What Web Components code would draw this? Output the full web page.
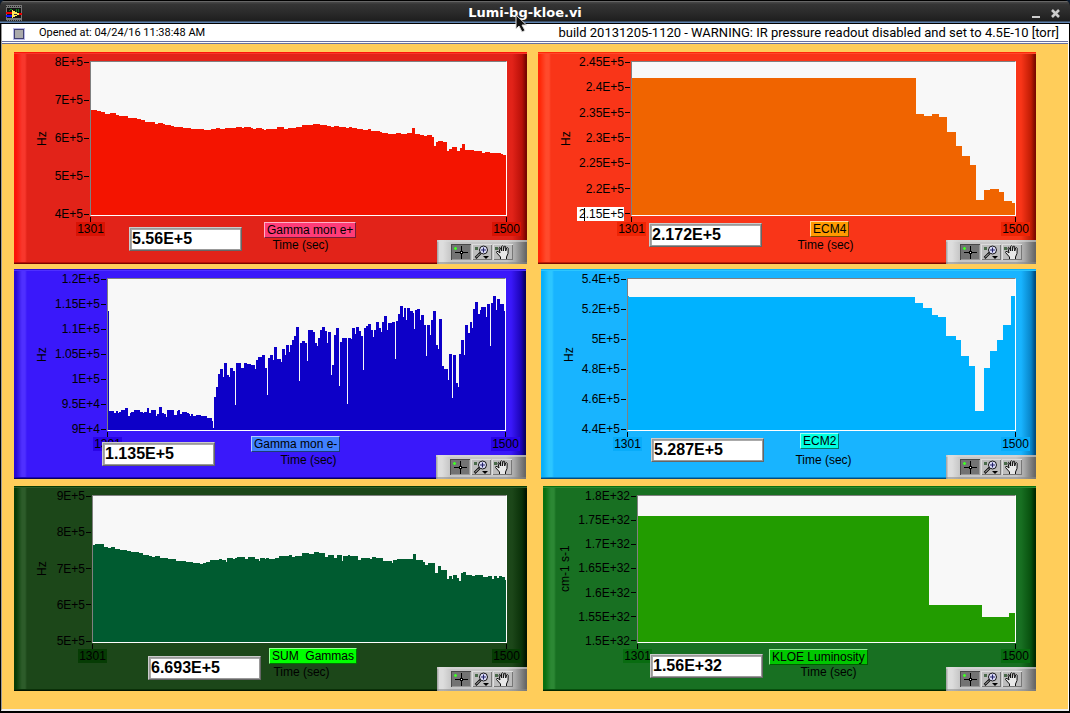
<!DOCTYPE html>
<html lang="en">
<head>
<meta charset="utf-8">
<title>Lumi-bg-kloe.vi</title>
<style>
html, body { margin: 0; height: 100%; }
body { background: #0a1a30; font: 12px/14px "Liberation Sans", Arial, sans-serif; color: #000; }
</style>
</head>
<body>
<vi-window heading="Lumi-bg-kloe.vi">
  <vi-status slot="status">
    <span slot="opened">Opened at: 04/24/16 11:38:48 AM</span>
    <span slot="build">build 20131205-1120 - WARNING: IR pressure readout disabled and set to 4.5E-10 [torr]</span>
  </vi-status>
  <panel-row style="--cols:513fr 498fr;--gap:11px;--share:210">
    <trend-panel data-key="eplus"></trend-panel>
    <trend-panel data-key="ecm4"></trend-panel>
  </panel-row>
  <panel-row style="--cols:512fr 495fr;--gap:15px;--share:210">
    <trend-panel data-key="eminus"></trend-panel>
    <trend-panel data-key="ecm2"></trend-panel>
  </panel-row>
  <panel-row style="--cols:513fr 493fr;--gap:16px;--share:205">
    <trend-panel data-key="sum"></trend-panel>
    <trend-panel data-key="kloe"></trend-panel>
  </panel-row>
</vi-window>

<template id="window-tpl">
<style>
:host { display: flex; flex-direction: column; min-height: 100vh; box-sizing: border-box; border-radius: 6px 6px 0 0; overflow: hidden; background: #000; }
header { position: relative; display: grid; grid-template-columns: 60px 1fr 60px; align-items: center; height: 24px; box-sizing: border-box; padding: 0 8px 0 6px;
  background: linear-gradient(#000 0 1px, #666 1px 2px, #444 2px 3px, #353535 4px, #2b2b2b 12px, #1e1e1e 21px, #5f83b0 22px 23px, #000 23px); }
.logo { width: 16px; height: 16px; margin-top: 2px; display: block; }
h1 { margin: 0; text-align: center; font: bold 13px/16px "DejaVu Sans", sans-serif; color: #fff; padding-right: 18px; margin-top: 2px; }
nav { display: flex; justify-content: flex-end; gap: 9px; padding-top: 1px; }
nav button { background: none; border: 0; padding: 0; width: 11px; height: 12px; }
nav svg { display: block; }
.pointer { position: absolute; left: calc(50% - 20px); top: 14px; z-index: 3; }
.frame { flex: 1; display: flex; flex-direction: column; padding: 0 1px 2px; background: #000; }
.inner { flex: 1; display: flex; flex-direction: column; border-left: 1px solid #999; border-right: 1px solid #fff; border-bottom: 2px solid #eee; }
main { flex: 1; display: flex; flex-direction: column; gap: 7px; padding: 8px 32px 18px 12px; background: #ffcd5a; }
</style>
<header>
  <svg class="logo" viewBox="0 0 16 16" shape-rendering="crispEdges">
    <rect width="16" height="16" fill="#777"/>
    <path d="M0 1h16M0 15h16" stroke="#222" stroke-width="1" stroke-dasharray="1 1"/>
    <rect x="1" y="3" width="14" height="10" fill="#141414"/>
    <path d="M3 6l2-2 2 2M10 4v3M12 4v3" stroke="#0a8a1a" fill="none"/>
    <path d="M0 8h6" stroke="#e00" stroke-width="2"/><path d="M0 11h6" stroke="#11f" stroke-width="2"/>
    <path d="M11 9h5" stroke="#e00" stroke-width="2"/>
    <path d="M6 5l8 4-8 4z" fill="#ffe95a"/><path d="M8 9h3" stroke="#333"/>
  </svg>
  <h1></h1>
  <nav>
    <button aria-label="Minimize"><svg width="11" height="12"><path d="M1 10h8" stroke="#ccc" stroke-width="2"/></svg></button>
    <button aria-label="Close"><svg width="11" height="12"><path d="M1 3l7 7M8 3l-7 7" stroke="#ccc" stroke-width="2.6"/></svg></button>
  </nav>
  <svg class="pointer" width="14" height="20" viewBox="0 0 14 20"><path d="M1 1v14l3-3 3 6 3-1.500-3-5.500h4.500z" fill="#111" stroke="#ddd"/></svg>
</header>
<div class="frame"><div class="inner">
  <slot name="status"></slot>
  <main><slot></slot></main>
</div></div>
</template>

<template id="status-tpl">
<style>
:host { display: flex; align-items: center; height: 20px; box-sizing: border-box; padding: 0 9px 2px 11px; background: linear-gradient(#fff 0 17px, #6870a0 17px 18px, #fff 18px 19px, #6870a0 19px); white-space: pre; font-family: Roboto, "Liberation Sans", sans-serif; }
button { width: 12px; height: 12px; margin: 1px 14px 0 0; padding: 0; background: #aaa; border: 1px solid #b8b8e8; box-shadow: inset 0 0 0 1px #404070; }
.opened { font-size: 11px; }
.space { flex: 1; }
.build { font-size: 13px; }
</style>
<button aria-label="Status indicator"></button>
<slot name="opened" class="opened"></slot><span class="space"></span>
<slot name="build" class="build"></slot>
</template>

<template id="row-tpl">
<style>
:host { display: grid; grid-template-columns: var(--cols); column-gap: var(--gap); flex: var(--share) 1 0; min-height: 160px; }
</style>
<slot></slot>
</template>

<template id="palette-tpl">
<style>
:host { display: flex; gap: 1px; justify-content: flex-end; box-sizing: border-box; width: 90px; height: 24px; padding: 4px 14px 4px 0;
  background: linear-gradient(transparent 22px, #8888 22px), linear-gradient(#ddd8 2px, transparent 2px), linear-gradient(90deg, #aaa 0 1px, #ddd 2px 6px, #c6c6c6 14px 70px, #aaa 78px, #666 89px); }
button { width: 20px; height: 16px; padding: 0; border: 0; background: #bdbdbd; box-shadow: inset 1px 1px #ddd, inset -1px -1px #777; }
button.on { background: #737373; box-shadow: inset 1px 1px #484848, inset -1px -1px #999; }
svg { display: block; }
</style>
<button class="on" aria-label="Cursor tool" aria-pressed="true"><svg width="20" height="16" viewBox="0 0 20 16" shape-rendering="crispEdges"><path d="M4 8.500h13M10.500 2v13" stroke="#000"/><path d="M9 7h3v3h-3z"/><path d="M10 8h1v1h-1z" fill="#fff"/><path d="M3 3h3v3h-3z" fill="#3e3" opacity=".5"/><path d="M4 3h1v3h-1zM3 4h3v1h-3z" fill="#4f2"/></svg></button>
<button aria-label="Zoom tool"><svg width="20" height="16" viewBox="0 0 20 16"><path d="M3 3h3v3h-3z" fill="#4a6a4a"/><path d="M8.500 9l-5 5" stroke="#000" stroke-width="2.500"/><path d="M8 9.500l-4 4" stroke="#ddd"/><circle cx="11.500" cy="6" r="4" fill="#e4e4ff" stroke="#111"/><path d="M9 6h5M11.500 3.500v5" stroke="#226" stroke-width="1.200"/><path d="M11 12h6l-3 3z"/></svg></button>
<button aria-label="Pan tool"><svg width="20" height="16" viewBox="0 0 20 16"><path d="M2 3h3v3h-3z" fill="#4a6a4a"/><path d="M7.500 15v-2L3.500 8.500q0-1.500 1.500-1l2 1.500-1-5q.5-1.500 1.500 0l1 3V2.500q1-1.500 1.800 0V7l.8-4.500q1-1 1.600 0V7l1-3q1-1 1.500.3L15 9.500 13.500 13v2" fill="#e8e8e8" stroke="#111"/></svg></button>
</template>

<template id="panel-tpl">
<style>
:host { display: grid; min-width: 0; grid-template: minmax(0, 1fr) 48px / var(--axis) minmax(0, 1fr) 20px; box-sizing: border-box; padding-top: 9px; background:
  linear-gradient(var(--edge) 0 1px, var(--lite) 1px 2px, transparent 2px),
  linear-gradient(0deg, var(--dark) 0 1px, var(--mid) 1px 2px, transparent 2px),
  linear-gradient(90deg, var(--edge) 0 2px, var(--lite) 8px 11px, transparent 13px),
  linear-gradient(270deg, var(--dark) 0 1px, var(--mid) 5px, transparent 15px), var(--base); }
.yaxis { display: flex; align-items: stretch; min-height: 0; }
.unit { width: 14px; margin-left: var(--ux, 21px); writing-mode: vertical-rl; transform: rotate(180deg); text-align: center; }
.ticks { flex: 1; margin: -6px 1px -5px 0; display: flex; flex-direction: column; justify-content: space-between; list-style: none; padding: 0; }
.ticks li { display: flex; align-items: center; justify-content: flex-end; gap: 1px; height: 14px; position: relative; white-space: nowrap; }
.ticks li::after { content: ""; width: 5px; height: 1px; background: #000; }
.ticks input { font: inherit; width: 47px; height: 14px; box-sizing: border-box; border: 0; padding: 0; background: #fff; text-align: right; color: #000; }
.caret { position: absolute; right: 45px; top: 1px; width: 1px; height: 13px; background: #000; }
.plot { border: 1px solid; border-color: #808080 #fff #fff #808080; background: #f8f8f8; min-height: 0; min-width: 0; overflow: hidden; }
.plot svg { display: block; width: 100%; height: 100%; }
.xaxis { grid-area: 2 / 2; display: flex; justify-content: space-between; align-items: flex-start; margin: 1px -14px 0 -14px; }
.xaxis span { display: flex; flex-direction: column; align-items: center; width: 29px; }
.xaxis span::before { content: ""; width: 1px; height: 5px; background: #000; }
.xaxis b { font-weight: normal; width: 29px; text-align: center; background: var(--mark); }
.time { grid-area: 2 / 2; text-align: center; margin: 22px 0 0 4px; }
.values { grid-area: 2 / 2; display: flex; align-items: flex-start; z-index: 1; margin-left: var(--rx); }
.values input { flex: none; width: 113px; height: 24px; box-sizing: border-box; margin-top: var(--ry); padding: 0 0 0 2px; background: #fff; border: 1px solid; border-color: #ccc #666 #666 #ccc; border-radius: 0; box-shadow: inset 0 0 0 1px #999, inset 1px 1px 0 1px #aaa; font: bold 16px/20px "Liberation Sans", Arial, sans-serif; color: #000; }
label { margin: var(--ty) 0 0 var(--tx); padding: 0 2px; line-height: 14px; border: 1px solid; border-color: #fff9 #0008 #0008 #fff9; background: var(--tag); white-space: pre; }
tool-palette { grid-area: 2 / 2 / 3 / 4; place-self: end; z-index: 2; }
</style>
<div class="yaxis"><div class="unit"></div><ul class="ticks"></ul></div>
<div class="plot"><svg preserveAspectRatio="none" shape-rendering="crispEdges" role="img"><path/></svg></div>
<div class="xaxis"><span><b>1301</b></span><span><b>1500</b></span></div>
<div class="time">Time (sec)</div>
<div class="values"><input id="value" readonly><label for="value"></label></div>
<tool-palette></tool-palette>
</template>

<script>
// Each trace is a list of "x,y" steps; a level holds until the next step. box = x y width height of the trace area.
const CHARTS = {
  eplus: { unit: 'Hz', ticks: '8E+5 7E+5 6E+5 5E+5 4E+5', name: 'Gamma mon e+', value: '5.56E+5', fill: '#f41400', box: [91, 62, 415, 152],
    css: '--axis:76px;--base:#e22319;--lite:#f8372c;--edge:#fb1408;--mid:#b81008;--dark:#780400;--mark:#d81304;--tag:#ff3c78;--rx:39px;--ry:11px;--tx:22px;--ty:6px',
    steps: '91,110 97,111 101,112 105,114 110,113 116,115 119,116 128,118 137,119 141,120 145,122 155,124 158,123 163,124 165,125 171,126 174,127 183,128 191,129 204,130 211,129 216,128 220,129 225,128 236,127 242,128 244,127 251,128 253,129 256,128 262,129 264,130 266,129 277,127 284,129 288,128 296,127 302,125 313,124 320,125 327,126 331,127 334,126 339,127 346,128 349,127 352,128 357,129 363,130 368,129 371,131 380,132 382,133 388,134 396,133 401,134 407,133 412,128 415,134 420,135 424,136 427,135 432,137 434,145 436,141 438,140 443,141 447,150 449,148 452,146 457,150 460,147 462,143 465,149 474,150 482,152 485,151 490,152 501,153 503,154' },
  ecm4: { unit: 'Hz', ticks: '2.45E+5 2.4E+5 2.35E+5 2.3E+5 2.25E+5 2.2E+5 2.15E+5', edit: true, name: 'ECM4', value: '2.172E+5', fill: '#f06400', box: [632, 63, 383, 153],
    css: '--axis:93px;--base:#f93518;--lite:#ff4a2c;--edge:#ff2808;--mid:#c01c04;--dark:#7c0800;--mark:#ee2404;--tag:#ff9a00;--rx:18px;--ry:7px;--tx:48px;--ty:5px',
    steps: '632,79 916,115 924,117 932,115 939,118 947,133 956,147 962,157 970,166 976,201 984,191 990,190 999,193 1004,202 1012,204' },
  eminus: { unit: 'Hz', ticks: '1.2E+5 1.15E+5 1.1E+5 1.05E+5 1E+5 9.5E+4 9E+4', name: 'Gamma mon e-', value: '1.135E+5', fill: '#0d00c8', box: [108, 279, 397, 151],
    css: '--axis:93px;--base:#3a18fa;--lite:#4f30ff;--edge:#2808d8;--mid:#1c04b8;--dark:#080060;--mark:#2a04e8;--tag:#4080ff;--rx:-5px;--ry:11px;--tx:36px;--ty:5px',
    steps: '108,311 109,411 114,413 116,411 118,413 119,412 121,410 125,408 128,416 130,413 131,412 134,410 140,412 143,413 144,412 147,408 149,413 151,410 156,416 157,414 159,407 162,413 164,414 166,417 167,410 174,415 177,411 178,410 180,414 182,412 187,413 189,414 190,416 191,414 193,416 196,415 201,416 207,418 212,421 213,428 214,397 216,387 218,374 220,369 223,377 224,363 227,375 229,377 230,368 233,371 235,405 236,363 241,368 244,363 247,364 251,365 255,369 256,360 258,357 262,355 265,368 267,395 268,358 270,355 273,360 274,347 277,359 281,362 282,349 285,355 286,345 289,352 290,345 292,340 294,336 296,327 299,381 300,343 302,341 305,343 307,361 308,330 313,332 315,343 317,346 318,338 320,330 322,327 325,331 327,343 328,332 331,375 332,365 334,335 336,328 339,386 340,342 342,338 347,404 348,338 351,339 352,328 355,334 356,327 359,331 361,336 363,370 364,328 366,326 368,324 371,330 373,337 374,330 376,322 379,328 381,332 382,322 384,316 387,330 388,323 392,322 395,359 396,321 398,314 400,306 403,317 404,308 406,320 407,308 410,311 413,313 414,329 415,310 417,309 420,320 421,315 424,325 426,356 427,325 430,335 431,320 433,311 436,345 438,349 439,319 442,366 444,369 448,380 449,354 452,398 453,355 456,383 458,387 459,354 461,340 464,355 465,325 468,333 470,322 472,328 473,309 475,302 478,314 480,310 481,307 486,317 487,304 490,346 491,303 493,296 496,310 497,299 500,304 504,311' },
  ecm2: { unit: 'Hz', ticks: '5.4E+5 5.2E+5 5E+5 4.8E+5 4.6E+5 4.4E+5', name: 'ECM2', value: '5.287E+5', fill: '#00b2ff', box: [628, 280, 388, 150],
    css: '--axis:86px;--base:#18b4ff;--lite:#2cc6ff;--edge:#08b0fa;--mid:#0884c8;--dark:#004c80;--mark:#08acfa;--tag:#00ffe0;--rx:24px;--ry:7px;--tx:36px;--ty:2px',
    steps: '628,297 629,298 916,304 924,309 933,316 939,318 947,337 957,341 962,356 970,366 976,411 985,368 991,352 998,341 1004,326 1012,297' },
  sum: { unit: 'Hz', ticks: '9E+5 8E+5 7E+5 6E+5 5E+5', name: 'SUM  Gammas', value: '6.693E+5', fill: '#005b30', box: [93, 496, 413, 146],
    css: '--axis:78px;--base:#1c4719;--lite:#2d5c2a;--edge:#063c06;--mid:#0a3008;--dark:#001400;--mark:#063c04;--tag:#00ff00;--rx:56px;--ry:13px;--tx:8px;--ty:5px',
    steps: '93,545 95,544 104,547 108,548 111,547 115,549 120,550 127,551 131,552 139,553 143,555 149,556 152,557 155,556 160,558 168,559 176,561 186,562 193,563 200,564 203,563 206,562 210,560 219,559 222,560 226,562 227,558 233,559 235,558 237,557 245,559 248,557 255,559 259,561 260,558 265,559 266,558 269,559 275,558 279,556 289,555 292,557 295,556 302,553 309,554 314,552 319,553 325,557 328,555 334,558 337,555 342,561 343,556 348,555 350,556 358,560 361,558 370,559 372,557 376,558 383,561 392,563 393,560 397,559 413,554 416,560 423,562 425,565 428,563 435,573 438,566 441,570 447,579 449,576 452,579 453,575 457,578 459,581 461,573 463,572 466,575 472,576 475,575 483,577 488,576 492,579 494,576 497,578 499,576 502,577 505,580' },
  kloe: { unit: 'cm-1 s-1', ticks: '1.8E+32 1.75E+32 1.7E+32 1.65E+32 1.6E+32 1.55E+32 1.5E+32', name: 'KLOE Luminosity', value: '1.56E+32', fill: '#229c00', box: [638, 497, 377, 146],
    css: '--axis:94px;--ux:15px;--base:#187022;--lite:#2c8834;--edge:#087010;--mid:#08500e;--dark:#002800;--mark:#086c10;--tag:#00c800;--rx:13px;--ry:11px;--tx:6px;--ty:6px',
    steps: '638,517 929,606 982,618 1009,614' },
};

const mount = (el, id) => {
  const root = el.attachShadow({ mode: 'open' });
  root.append(document.getElementById(id).content.cloneNode(true));
  return root;
};

customElements.define('tool-palette', class extends HTMLElement {
  constructor() { super(); mount(this, 'palette-tpl'); }
});

customElements.define('trend-panel', class extends HTMLElement {
  connectedCallback() {
    if (this.shadowRoot) return;
    const root = mount(this, 'panel-tpl');
    const $ = s => root.querySelector(s);
    const c = CHARTS[this.dataset.key];
    this.style.cssText = c.css;
    $('.unit').textContent = c.unit;
    const ticks = c.ticks.split(' ');
    ticks.forEach((t, i) => {
      const li = document.createElement('li');
      if (c.edit && i === ticks.length - 1) {
        li.innerHTML = '<input aria-label="Scale minimum"><i class="caret"></i>';
        li.firstChild.value = t;
      } else li.innerHTML = `<span>${t}</span>`;
      $('.ticks').append(li);
    });
    const [x, y, w, h] = c.box;
    const levels = c.steps.split(' ').map(s => s.split(','));
    $('.plot svg').setAttribute('viewBox', c.box.join(' '));
    $('.plot svg').setAttribute('aria-label', c.name);
    $('.plot path').setAttribute('d', `M${x} ${y + h}` + levels.map(([a, b]) => `H${a}V${b}`).join('') + `H${x + w}V${y + h}z`);
    $('.plot path').setAttribute('fill', c.fill);
    $('#value').value = c.value;
    $('label').textContent = c.name;
  }
});

customElements.define('panel-row', class extends HTMLElement {
  constructor() { super(); mount(this, 'row-tpl'); }
});

customElements.define('vi-status', class extends HTMLElement {
  constructor() { super(); mount(this, 'status-tpl'); }
});

customElements.define('vi-window', class extends HTMLElement {
  constructor() { super(); mount(this, 'window-tpl').querySelector('h1').textContent = this.getAttribute('heading'); }
});
</script>
</body>
</html>
